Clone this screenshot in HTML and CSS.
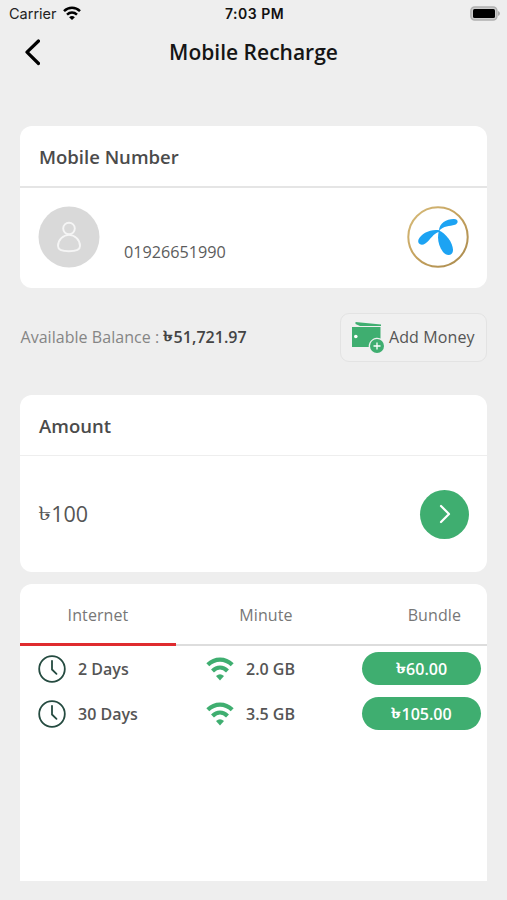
FILE: index.html
```html
<!DOCTYPE html>
<html lang="en">
<head>
<meta charset="utf-8">
<title>Mobile Recharge</title>
<link rel="stylesheet" href="styles.css">
</head>
<body>
<svg class="defs" width="0" height="0" aria-hidden="true">
  <symbol id="clock" viewBox="0 0 28 28"><circle cx="14" cy="14" r="12.800"/><path d="M14 5.800v8.700l4.500 4.300"/></symbol>
  <symbol id="wifi" viewBox="0 0 28 24"><path class="arc" d="M1.800 7.800C9 .8 19 .8 26.200 7.800M6.500 13.900c4.500-4.300 10.500-4.300 15 0"/><path d="M10 18.900q4-3.500 8 0L14 23.500z"/></symbol>
</svg>
<div class="status">
  <div class="carrier">Carrier
    <svg width="18" height="14" viewBox="0 0 18 14"><path d="M1 5.200C5.600.7 12.400.7 17 5.200M4 8.700c3-2.800 7-2.800 10 0" fill="none" stroke="#000" stroke-width="2.500"/><path d="M6.100 11.200q2.900-2.400 5.800 0L9 13.900z"/></svg>
  </div>
  <div class="time">7:03 PM</div>
  <svg class="battery" width="31" height="15" viewBox="0 0 31 15"><rect x="1.900" y=".9" width="26" height="13.200" rx="3.800" fill="#ccc" stroke="#b0b0b0" stroke-width="1.500"/><rect x="4" y="3" width="22" height="9" rx="1.500"/><path d="M29 5q2 .8 2 2.500t-2 2.500z" fill="#aaa"/></svg>
</div>
<header class="nav">
  <svg class="back" width="18" height="28" viewBox="0 0 18 28"><path d="M16.500 3L5 14.200 16.500 25.500" fill="none" stroke="#000" stroke-width="3.200" stroke-linecap="round" stroke-linejoin="round"/></svg>
  <h1>Mobile Recharge</h1>
</header>
<main>
  <section class="card number-card">
    <h2>Mobile Number</h2>
    <div class="contact">
      <svg class="avatar" width="62" height="62" viewBox="0 0 62 62"><circle cx="31" cy="31" r="30.500" fill="#d9d9d9"/><g fill="none" stroke="#f5f5f5" stroke-width="1.900"><circle cx="31" cy="22.500" r="5.800"/><path d="M31 28.900c-5.800 0-11 5-11 11 0 4 5 5.300 11 5.300s11-1.300 11-5.300c0-6-5.200-11-11-11z"/></g></svg>
      <span class="phone">01926651990</span>
      <svg class="operator" width="62" height="62" viewBox="0 0 62 62"><defs><linearGradient id="gold" x1="0" y1="0" x2="1" y2="1"><stop stop-color="#d8bd7c"/><stop offset=".5" stop-color="#c3a05c"/><stop offset="1" stop-color="#a98a4e"/></linearGradient></defs><circle cx="31" cy="31" r="29.700" fill="#fff" stroke="url(#gold)" stroke-width="2"/><g fill="#1ca3f3"><path d="M32 25C32 17 40 12.800 47 13c4.800.2 4.600 4.500 1 5.800-5.500 1.800-11.500.8-16 6.200z"/><path d="M32.500 24.300C24 22.500 14 27.500 11.500 33.500c-1.500 4.500 3 6.700 6.800 4C24 33.500 26 27 32.500 26z"/><path d="M32 24.500c6.500 2.500 13.500 11.500 14 19 .3 6-6 7.500-10 2.500-5-6.500-6-14.500-4-21.500z"/></g></svg>
    </div>
  </section>
  <section class="balance-row">
    <p>Available Balance : <b><span class="taka">৳</span>51,721.97</b></p>
    <button class="add-money"><svg width="34" height="33" viewBox="0 0 34 33"><path d="M4.500 1L30 3.500V5H9L4.500 3z" fill="#3fae70"/><path d="M1 6h28.500v11.500a8.500 8.500 0 0 0-11.800 8.500H1z" fill="#3fae70"/><circle cx="4.800" cy="15.500" r="1.800" fill="#fff"/><circle cx="26" cy="25" r="7" fill="#3fae70"/><path d="M26 21.500v7M22.500 25h7" stroke="#fff" stroke-width="1.300"/></svg>Add Money</button>
  </section>
  <section class="card amount-card">
    <h2>Amount</h2>
    <div class="amount"><span><span class="taka">৳</span>100</span><button class="next"><svg width="14" height="20" viewBox="0 0 14 20"><path d="M3 2l8 8-8 8" fill="none" stroke="#fff" stroke-width="2.200" stroke-linecap="round" stroke-linejoin="round"/></svg></button></div>
  </section>
  <section class="card packs">
    <nav class="tabs"><span class="tab active">Internet</span><span class="tab minute">Minute</span><span class="tab bundle">Bundle</span></nav>
    <div class="pack"><svg class="clock"><use href="#clock"/></svg><span>2 Days</span><svg class="wifi"><use href="#wifi"/></svg><span>2.0 GB</span><button class="price"><span class="taka">৳</span>60.00</button></div>
    <div class="pack"><svg class="clock"><use href="#clock"/></svg><span>30 Days</span><svg class="wifi"><use href="#wifi"/></svg><span>3.5 GB</span><button class="price"><span class="taka">৳</span>105.00</button></div>
  </section>
</main>
</body>
</html>
```
FILE: styles.css
```css
* { box-sizing: border-box; }
body { margin: 0; height: 900px; overflow: hidden; background: #eee; color: #4b4b4b; font: 16px "Open Sans", "Noto Sans", sans-serif; }
svg { display: block; flex: none; }
.defs { position: absolute; }
h1, h2, p { margin: 0; }
button { border: 0; padding: 0; font: inherit; color: inherit; }
.status { height: 27px; padding: 0 7px 0 9px; display: grid; grid-template-columns: 1fr auto 1fr; align-items: center; font-family: Inter, sans-serif; font-size: 14px; color: #222; }
.carrier { display: flex; align-items: center; gap: 6px; font-size: 14.500px; }
.carrier svg { margin-top: -2px; }
.time { font-weight: 600; color: #111; letter-spacing: .5px; }
.battery { justify-self: end; }
.nav { height: 99px; padding: 0 22px; display: grid; grid-template-columns: 18px 1fr 18px; align-items: start; }
.back { margin-top: 11px; }
h1 { font-size: 21px; line-height: 28px; font-weight: 600; text-align: center; color: #151515; margin-top: 11px; }
main { padding: 0 20px; }
.card { background: #fff; border-radius: 12px; }
h2 { font-size: 18.500px; font-weight: 600; line-height: 61px; padding: 0 19px; height: 62px; border-bottom: 2px solid #e5e5e5; }
.number-card { height: 162px; }
.contact { display: flex; align-items: center; padding: 18px 18px 0; }
.phone { margin: 30px auto 0 24px; font-size: 16.200px; line-height: 22px; color: #5c5c5c; }
.balance-row { display: flex; justify-content: space-between; align-items: center; height: 107px; padding-bottom: 9px; color: #858585; }
.balance-row p { padding: 2px 0 0 .500px; letter-spacing: .04px; }
b { font-weight: 600; color: #444; }
.taka { display: inline-block; transform: translateY(-1px) scale(1.250, .88); margin: 0 1.200px 0 1px; }
.add-money { width: 147px; height: 49px; border: 1.500px solid #e3e3e3; border-radius: 9px; background: #f0f0f0; display: flex; align-items: center; gap: 4px; padding-left: 10px; color: #555; letter-spacing: .1px; }
.amount-card { height: 177px; }
.amount-card h2 { border-bottom: 1px solid #eee; height: 61px; }
.amount { height: 116px; padding: 0 18px; display: flex; align-items: center; justify-content: space-between; font-size: 21.500px; color: #555; }
.amount > span { padding-top: 3px; }
.next { width: 49px; height: 49px; border-radius: 50%; background: #3fae70; display: grid; place-items: center; }
.packs { margin-top: 12px; height: 297px; border-radius: 12px 12px 0 0; }
.tabs { height: 62px; display: grid; grid-template-columns: 156px 180px 1fr; border-bottom: 2px solid #ddd; color: #777; line-height: 62px; text-align: center; letter-spacing: .1px; }
.tab.active { height: 62px; border-bottom: 3px solid #df2b2f; }
.bundle { text-align: right; padding-right: 26px; }
.pack { height: 45px; display: grid; grid-template-columns: 28px 140px 28px 128px 119px; align-items: center; padding-left: 18px; font-weight: 600; color: #555; }
.pack > span { padding-left: 12px; }
.clock { width: 28px; height: 28px; fill: none; stroke: #254b40; stroke-width: 1.800; stroke-linecap: round; }
.wifi { width: 28px; height: 24px; fill: #3fae70; }
.arc { fill: none; stroke: #3fae70; stroke-width: 4.200; }
.price { width: 119px; height: 33px; border-radius: 17px; background: #3fae70; color: #fff; line-height: 35px; }
```
